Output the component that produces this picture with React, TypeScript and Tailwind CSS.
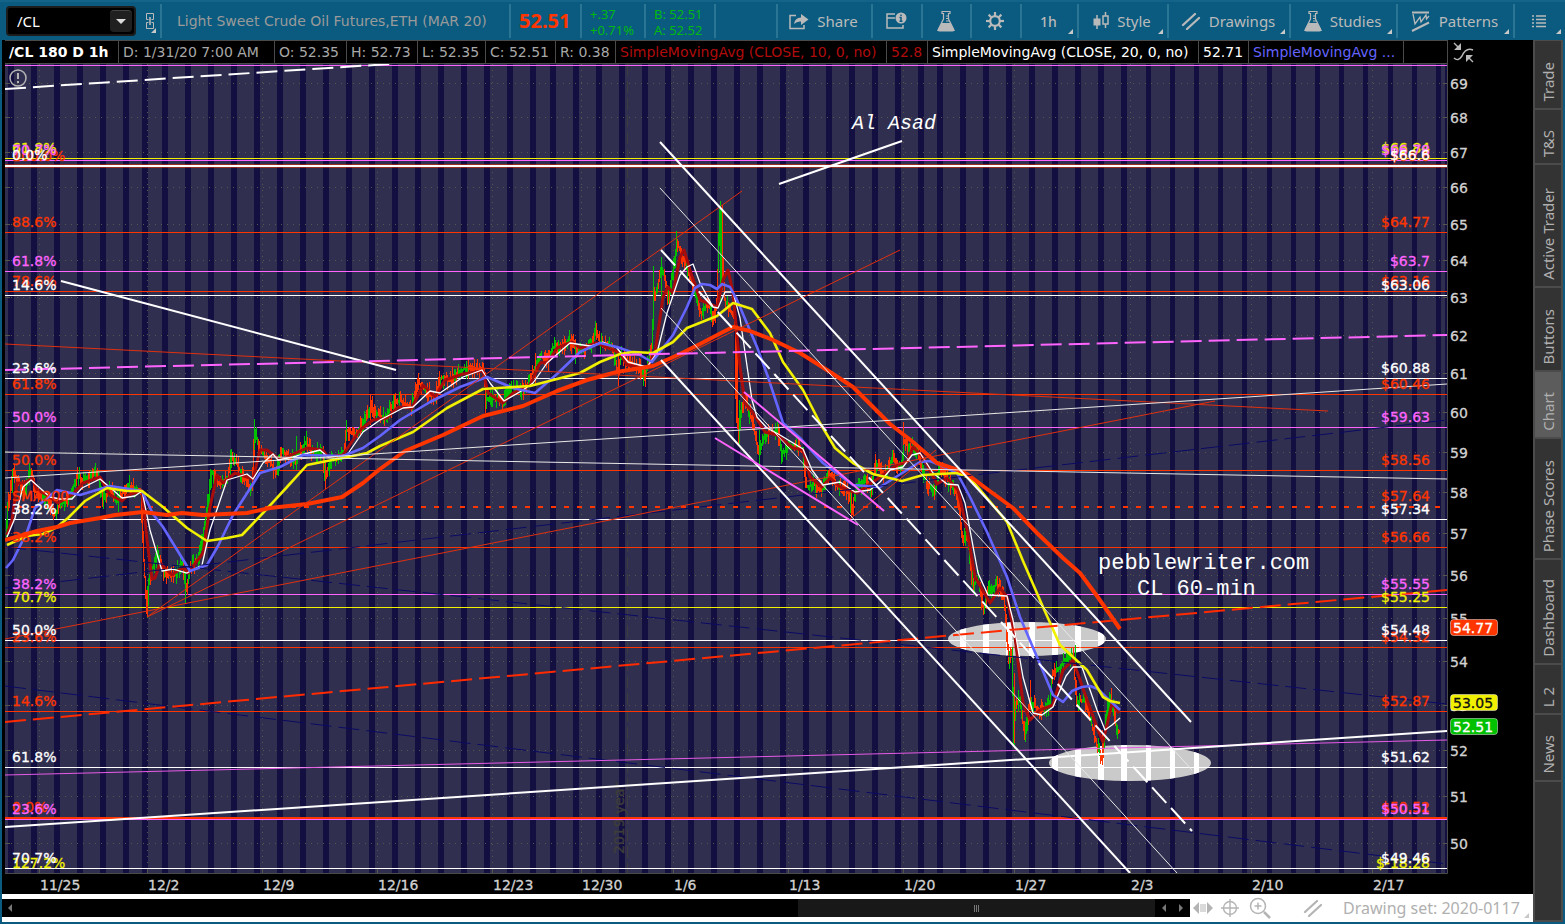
import type { ReactNode } from "react";

type Pt = [number, number];

const ORANGE = "#ff3500";
const MAGENTA = "#ff64ff";
const YELLOW = "#f0f000";
const WHITE = "#ffffff";
const RED = "#e0300f";
const NAVY = "#0a0a64";

const TABS = [
  { label: "Trade", height: "h-[69px]" },
  { label: "T&S", height: "h-[55px]" },
  { label: "Active Trader", height: "h-[123px]" },
  { label: "Buttons", height: "h-[84px]" },
  { label: "Chart", height: "h-[67px]", active: true },
  { label: "Phase Scores", height: "h-[121px]" },
  { label: "Dashboard", height: "h-[105px]" },
  { label: "L 2", height: "h-[50px]" },
  { label: "News", height: "h-[67px]" },
];

const STUDY_CELLS = [
  { text: "/CL 180 D 1h", className: "w-[114px] font-bold text-white" },
  { text: "D: 1/31/20 7:00 AM", className: "w-[156px] text-[#a8a8a8]" },
  { text: "O: 52.35", className: "w-[72px] text-[#a8a8a8]" },
  { text: "H: 52.73", className: "w-[71px] text-[#a8a8a8]" },
  { text: "L: 52.35", className: "w-[68px] text-[#a8a8a8]" },
  { text: "C: 52.51", className: "w-[70px] text-[#a8a8a8]" },
  { text: "R: 0.38", className: "w-[60px] text-[#a8a8a8]" },
  { text: "SimpleMovingAvg (CLOSE, 10, 0, no)", className: "w-[271px] text-[#b00c0c]" },
  { text: "52.8", className: "w-[41px] text-[#b00c0c]" },
  { text: "SimpleMovingAvg (CLOSE, 20, 0, no)", className: "w-[271px] text-white" },
  { text: "52.71", className: "w-[50px] text-white" },
  { text: "SimpleMovingAvg ...", className: "w-[155px] text-[#6464ff]" },
];

const DATES: [string, number][] = [
  ["11/25", 39], ["12/2", 147], ["12/9", 262], ["12/16", 377], ["12/23", 492],
  ["12/30", 581], ["1/6", 673], ["1/13", 788], ["1/20", 903], ["1/27", 1014],
  ["2/3", 1130], ["2/10", 1251], ["2/17", 1372],
];

const STRIPES = [
  8, 31, 54, 77, 100, 123, 142, 162, 185, 208, 231, 254, 277, 300, 323, 346, 369,
  392, 415, 438, 461, 484, 507, 530, 550, 573, 596, 619, 642, 665, 688, 711, 734,
  757, 780, 803, 826, 849, 872, 895, 918, 937, 960, 983, 1006, 1029, 1052, 1075,
  1098, 1121, 1146, 1170, 1194, 1218, 1242, 1267, 1291, 1315, 1339, 1363, 1388,
  1412, 1436,
];

// Retracement levels, later ones are painted over earlier ones
const LEVELS: { y: number; color: string; left: string; right: string; w?: number }[] = [
  { y: 166, color: ORANGE, left: "100.0%", right: "$66.6", w: 4 },
  { y: 158, color: YELLOW, left: "61.8%", right: "$66.84" },
  { y: 160, color: MAGENTA, left: "70.7%", right: "$66.78" },
  { y: 166, color: WHITE, left: "0.0%", right: "$66.6", w: 2 },
  { y: 232, color: ORANGE, left: "88.6%", right: "$64.77" },
  { y: 271, color: MAGENTA, left: "61.8%", right: "$63.7" },
  { y: 291, color: ORANGE, left: "78.6%", right: "$63.16" },
  { y: 295, color: WHITE, left: "14.6%", right: "$63.06" },
  { y: 394, color: ORANGE, left: "61.8%", right: "$60.46" },
  { y: 378, color: WHITE, left: "23.6%", right: "$60.88" },
  { y: 427, color: MAGENTA, left: "50.0%", right: "$59.63" },
  { y: 470, color: ORANGE, left: "50.0%", right: "$58.56" },
  { y: 547, color: ORANGE, left: "38.2%", right: "$56.66" },
  { y: 519, color: WHITE, left: "38.2%", right: "$57.34" },
  { y: 607, color: YELLOW, left: "70.7%", right: "$55.25" },
  { y: 594, color: MAGENTA, left: "38.2%", right: "$55.55" },
  { y: 647, color: ORANGE, left: "23.6%", right: "$54.32" },
  { y: 640, color: WHITE, left: "50.0%", right: "$54.48" },
  { y: 711, color: ORANGE, left: "14.6%", right: "$52.87" },
  { y: 767, color: WHITE, left: "61.8%", right: "$51.62" },
  { y: 818, color: ORANGE, left: "0.0%", right: "$50.52", w: 2 },
  { y: 819, color: MAGENTA, left: "23.6%", right: "$50.51" },
  { y: 873, color: YELLOW, left: "127.2%", right: "$-18.28" },
  { y: 868, color: WHITE, left: "70.7%", right: "$49.46" },
];

const TRENDS: { p: [number, number, number, number]; color: string; w: number; dash?: string }[] = [
  { p: [5, 547, 1447, 704], color: NAVY, w: 1, dash: "21 7" },
  { p: [5, 588, 1447, 420], color: NAVY, w: 1, dash: "21 7" },
  { p: [5, 686, 1447, 864], color: NAVY, w: 1, dash: "21 7" },
  { p: [5, 344, 1328, 411], color: RED, w: 1 },
  { p: [147, 617, 742, 191], color: RED, w: 1 },
  { p: [147, 617, 900, 250], color: RED, w: 1 },
  { p: [5, 639, 1215, 401], color: RED, w: 1 },
  { p: [850, 519, 936, 450], color: RED, w: 1 },
  { p: [5, 452, 1447, 479], color: "#e8e8e8", w: 1 },
  { p: [5, 478, 1447, 384], color: "#e8e8e8", w: 1 },
  { p: [5, 89, 390, 64], color: WHITE, w: 2, dash: "21 7" },
  { p: [61, 281, 396, 370], color: WHITE, w: 2 },
  { p: [5, 370, 1447, 335], color: MAGENTA, w: 2, dash: "21 7" },
  { p: [5, 722, 1447, 590], color: "#ff2a00", w: 2, dash: "21 7" },
  { p: [5, 775, 1447, 740], color: "#e65ae6", w: 1 },
  { p: [5, 827, 1447, 731], color: WHITE, w: 2 },
  { p: [779, 184, 902, 141], color: WHITE, w: 2 },
  { p: [660, 142, 1191, 722], color: WHITE, w: 2 },
  { p: [660, 188, 1192, 770], color: "#e8e8e8", w: 1 },
  { p: [661, 250, 1192, 831], color: WHITE, w: 2, dash: "21 7" },
  { p: [661, 308, 1177, 873], color: "#e8e8e8", w: 1 },
  { p: [661, 360, 1130, 873], color: WHITE, w: 2 },
  { p: [744, 392, 884, 511], color: MAGENTA, w: 2 },
  { p: [715, 438, 858, 525], color: MAGENTA, w: 2 },
];

const SMA200 =
  "5,540 37,531 57,527 70,523 100,518 115,515 143,512 167,515 182,513 203,515 247,513 270,508 307,504 342,497 363,483 380,469 405,451 443,435 483,416 523,406 557,391 587,380 617,372 653,366 680,354 700,344 723,332 733,327 750,331 773,340 800,353 827,370 853,387 890,424 913,442 937,463 958,470 967,474 987,489 1013,508 1037,533 1063,558 1080,573 1097,596 1120,629";

const SMA100 =
  "7,545 27,536 43,534 57,527 68,518 85,501 107,488 127,491 142,491 163,507 187,528 207,541 227,538 242,535 263,513 287,487 307,465 327,461 343,458 367,453 380,446 413,432 447,408 483,389 530,386 557,379 580,373 600,362 620,354 633,352 653,353 673,342 687,328 717,316 733,303 752,309 770,333 783,362 803,390 820,423 835,448 853,463 873,474 902,481 923,475 957,473 970,478 987,498 1007,522 1023,561 1043,607 1060,645 1087,670 1103,697 1110,701 1120,703";

const SMA50 =
  "6,568 13,560 27,532 35,508 57,490 80,495 110,486 142,491 153,514 163,527 190,571 207,565 218,546 233,515 260,473 280,467 303,455 343,456 363,448 380,436 400,420 430,402 460,387 487,377 513,388 535,393 557,374 580,352 600,343 617,347 640,355 652,362 673,335 687,307 695,288 702,284 710,285 717,289 722,284 730,287 737,300 757,347 768,377 783,423 800,438 823,463 853,485 880,487 907,470 920,462 930,461 947,468 957,473 970,497 987,532 1007,577 1020,617 1037,657 1053,695 1063,702 1072,691 1082,687 1090,686 1098,689 1107,698 1120,710";

const SMA20 =
  "7,537 15,518 23,487 31,480 50,497 60,499 72,499 82,488 100,479 113,490 122,498 135,496 142,491 150,530 162,571 173,569 187,573 202,565 210,530 227,480 247,474 253,479 263,463 273,454 278,460 293,457 320,450 328,457 347,455 363,432 380,420 403,408 413,407 430,391 440,393 463,377 482,370 490,383 504,401 523,390 533,383 547,363 570,343 590,346 603,342 617,348 628,362 647,367 657,353 667,313 680,275 687,267 693,264 700,283 713,307 718,308 725,292 733,292 740,318 752,400 757,417 767,428 780,435 803,449 812,470 823,485 840,482 855,492 870,490 880,482 890,470 903,467 912,455 920,453 933,473 947,484 958,485 965,503 978,573 988,595 1007,596 1013,620 1023,677 1033,713 1042,715 1053,707 1066,676 1073,667 1082,667 1097,710 1105,730 1112,725 1120,718";

const SMA10 =
  "7,535 12,520 17,483 25,483 32,478 37,490 47,495 58,503 72,495 83,483 100,477 110,495 122,501 128,495 142,491 147,540 152,579 155,578 160,563 172,575 183,567 188,573 203,553 210,507 217,475 223,483 235,473 253,479 260,450 267,450 280,460 307,448 323,450 328,457 343,455 353,440 360,430 373,420 387,418 398,407 412,408 423,385 435,397 445,380 463,374 483,371 488,393 503,403 513,393 530,385 540,363 548,362 557,348 572,342 580,348 597,343 620,353 627,365 647,368 655,353 663,297 668,287 673,293 680,257 684,250 690,270 700,300 717,307 723,280 728,270 733,293 740,367 745,403 753,413 765,432 777,435 793,448 803,450 810,477 822,487 830,478 840,487 857,493 873,482 897,465 907,462 913,447 923,457 937,484 947,478 958,490 967,530 975,577 990,603 1000,588 1007,597 1015,637 1023,703 1030,720 1040,710 1053,705 1063,670 1073,660 1087,700 1098,730 1103,742 1112,703 1119,713";

// Swing points of the hourly price, bars are filled in between them
const SWINGS: Pt[] = [
  [6, 535], [8, 510], [13, 475], [17, 478], [25, 492], [31, 470], [35, 490], [45, 495],
  [55, 515], [60, 505], [70, 497], [78, 475], [83, 480], [90, 478], [98, 472], [103, 500],
  [110, 490], [118, 502], [127, 485], [141, 490], [144, 560], [147, 610], [149, 580],
  [158, 553], [165, 575], [175, 575], [183, 563], [186, 590], [190, 570], [200, 555],
  [207, 510], [212, 472], [220, 485], [228, 477], [232, 455], [240, 470], [252, 490],
  [255, 430], [260, 450], [270, 462], [277, 472], [282, 450], [295, 462], [302, 448],
  [306, 442], [313, 455], [323, 450], [325, 478], [332, 460], [345, 450], [347, 430],
  [355, 435], [362, 425], [368, 415], [371, 405], [375, 412], [385, 418], [393, 405],
  [400, 400], [412, 408], [418, 382], [425, 390], [435, 398], [441, 378], [450, 380],
  [462, 370], [470, 367], [484, 370], [486, 400], [495, 398], [503, 402], [512, 388],
  [525, 390], [534, 370], [540, 355], [548, 362], [553, 347], [562, 345], [570, 340],
  [578, 352], [590, 347], [596, 328], [600, 343], [612, 348], [618, 372], [622, 355],
  [632, 365], [643, 370], [645, 380], [652, 345], [654, 300], [661, 272], [664, 275],
  [669, 300], [674, 265], [677, 242], [682, 255], [690, 275], [697, 300], [702, 315],
  [708, 300], [714, 320], [717, 300], [720, 215], [722, 250], [725, 300], [735, 320],
  [736, 390], [739, 435], [742, 405], [745, 400], [752, 420], [759, 453], [765, 435],
  [778, 430], [782, 453], [792, 445], [803, 450], [807, 487], [815, 485], [822, 492],
  [828, 472], [838, 488], [848, 490], [852, 510], [856, 490], [866, 478], [871, 492],
  [876, 463], [884, 475], [893, 460], [902, 468], [904, 442], [910, 447], [918, 452],
  [925, 480], [935, 494], [940, 468], [948, 480], [955, 490], [959, 500], [962, 535],
  [968, 540], [973, 585], [978, 580], [984, 612], [987, 592], [997, 584], [1004, 597],
  [1009, 660], [1012, 650], [1014, 735], [1016, 705], [1020, 698], [1025, 738], [1030, 702],
  [1040, 710], [1050, 705], [1053, 672], [1060, 668], [1067, 658], [1073, 655], [1077, 702],
  [1085, 700], [1092, 725], [1097, 745], [1102, 760], [1107, 713], [1111, 697], [1117, 730],
  [1120, 732],
];

const SPIKES: [number, number, number, string][] = [
  [254, 419, 450, "#00c000"],
  [370, 394, 425, ORANGE],
  [306, 431, 450, "#00c000"],
  [296, 436, 455, "#00c000"],
  [147, 590, 617, ORANGE],
  [185, 570, 603, "#00c000"],
  [325, 460, 489, ORANGE],
  [485, 372, 413, ORANGE],
  [535, 353, 385, ORANGE],
  [575, 345, 364, "#00c000"],
  [618, 350, 386, ORANGE],
  [645, 370, 387, ORANGE],
  [653, 266, 330, "#00c000"],
  [661, 257, 300, "#00c000"],
  [720, 201, 300, "#00c000"],
  [722, 205, 290, ORANGE],
  [739, 400, 444, "#00c000"],
  [759, 430, 464, "#00c000"],
  [851, 490, 518, ORANGE],
  [903, 422, 445, ORANGE],
  [1014, 673, 743, ORANGE],
  [1030, 680, 710, ORANGE],
  [1075, 645, 670, "#00c000"],
  [1102, 730, 765, ORANGE],
];

function noise(n: number) {
  const v = Math.sin(n * 127.1 + 11.7) * 43758.5453;
  return v - Math.floor(v);
}

function buildBars() {
  const up: string[] = [];
  const down: string[] = [];
  for (let i = 0; i < SWINGS.length - 1; i++) {
    const [x0, y0] = SWINGS[i];
    const [x1, y1] = SWINGS[i + 1];
    for (let x = x0; x < x1; x++) {
      const a = y0 + ((y1 - y0) * (x - x0)) / (x1 - x0);
      const b = y0 + ((y1 - y0) * (x + 1 - x0)) / (x1 - x0);
      const top = Math.round(Math.min(a, b) - 1 - noise(x) ** 2 * 10);
      const bottom = Math.round(Math.max(a, b) + 1 + noise(x + 900) ** 2 * 10);
      const rising = noise(Math.floor(x / 2) + 77) < 0.3 ? y1 > y0 : y1 < y0;
      (rising ? up : down).push(`M${x + 0.5} ${top}V${bottom}`);
    }
  }
  return { up: up.join(""), down: down.join("") };
}

const BARS = buildBars();

const priceY = (p: number) => Math.round(82.6 + (760 * Math.log(69 / p)) / Math.log(69 / 50));
const PRICES = Array.from({ length: 20 }, (_, i) => 69 - i);

function PriceTag({ y, text, fill, color }: { y: number; text: string; fill: string; color: string }) {
  return (
    <g>
      <rect x={1450.5} y={y + 0.5} width={47} height={16} rx={3} fill={fill} stroke="#ffffff" strokeOpacity={0.45} />
      <text x={1453} y={y + 14} fill={color} stroke={color} strokeWidth={0.3} className="text-[14px]">
        {text}
      </text>
    </g>
  );
}

function PriceChart() {
  return (
    <svg
      viewBox="5 64 1528 830"
      className="block w-full bg-black"
      role="img"
      aria-label="Crude oil futures hourly chart"
      fontFamily="'DejaVu Sans', sans-serif"
    >
      <defs>
        <clipPath id="plot">
          <rect x={5} y={64} width={1442} height={809} />
        </clipPath>
        <clipPath id="zones">
          <ellipse cx={1027} cy={639} rx={79} ry={17} />
          <ellipse cx={1130} cy={763} rx={81} ry={18} />
        </clipPath>
      </defs>

      <rect x={5} y={64} width={1442} height={809} fill="#312f4f" />
      <g clipPath="url(#plot)">
        {STRIPES.map((x) => (
          <rect key={x} x={x} y={64} width={x > 1140 ? 5 : 6} height={809} fill="#130f41" />
        ))}
        <rect x={1445} y={64} width={2} height={809} fill="#130f41" />

        {/* Grid */}
        <g stroke="#56564c" shapeRendering="crispEdges">
          {PRICES.map((p) => (
            <g key={p}>
              <line x1={5} x2={1447} y1={priceY(p) + 0.5} y2={priceY(p) + 0.5} strokeDasharray="1 5" />
              <line x1={5} x2={10} y1={priceY(p) + 0.5} y2={priceY(p) + 0.5} />
              <line x1={1443} x2={1447} y1={priceY(p) + 0.5} y2={priceY(p) + 0.5} />
            </g>
          ))}
          {DATES.map(([d, x]) => (
            <g key={d}>
              <line x1={x + 0.5} x2={x + 0.5} y1={64} y2={873} strokeDasharray="1 5" />
              <line x1={x + 0.5} x2={x + 0.5} y1={869} y2={873} />
            </g>
          ))}
          <line x1={627.5} x2={627.5} y1={64} y2={873} stroke="#3c3c3c" strokeDasharray="12 5" />
        </g>
        <text transform="translate(624 854) rotate(-90)" fill="#3d3d3a" stroke="#3d3d3a" strokeWidth={0.4} className="text-[14px]">
          2019 year
        </text>

        {/* Target zones */}
        <g clipPath="url(#zones)">
          <rect x={940} y={610} width={280} height={180} fill="#cacaca" />
          {STRIPES.map((x) => (
            <rect key={x} x={x} y={610} width={x > 1140 ? 5 : 6} height={180} fill="#ffffff" />
          ))}
        </g>

        {/* Level lines */}
        <g shapeRendering="crispEdges">
          <line x1={5} x2={1447} y1={65.5} y2={65.5} stroke={MAGENTA} />
          {LEVELS.map((l, i) => (
            <line
              key={i}
              x1={5}
              x2={1447}
              y1={l.w ? l.y : l.y + 0.5}
              y2={l.w ? l.y : l.y + 0.5}
              stroke={l.color}
              strokeWidth={l.w ?? 1}
              strokeOpacity={l.w === 4 ? 0.5 : 1}
            />
          ))}
          <line x1={5} x2={1443} y1={507} y2={507} stroke={ORANGE} strokeWidth={2} strokeDasharray="5 8" />
        </g>

        {/* Price bars */}
        <path d={BARS.up} stroke="#00c000" fill="none" strokeWidth={1} />
        <path d={BARS.down} stroke={ORANGE} fill="none" strokeWidth={1} />
        {SPIKES.map(([x, y0, y1, c]) => (
          <line key={`${x}-${y0}`} x1={x + 0.5} x2={x + 0.5} y1={y0} y2={y1} stroke={c} strokeWidth={1} />
        ))}
        <rect x={720} y={208} width={2} height={80} fill="#00c000" />
        <rect x={736} y={325} width={2} height={98} fill={ORANGE} />

        {/* Averages */}
        <g fill="none" strokeLinejoin="round">
          <polyline points={SMA10} stroke="#a80c0c" strokeWidth={3} />
          <polyline points={SMA20} stroke={WHITE} strokeWidth={1.3} />
          <polyline points={SMA50} stroke="#6464ff" strokeWidth={2.6} />
          <polyline points={SMA100} stroke={YELLOW} strokeWidth={2.6} />
          <polyline points={SMA200} stroke={ORANGE} strokeWidth={4} />
        </g>

        {TRENDS.map((t, i) => (
          <line
            key={i}
            x1={t.p[0]}
            y1={t.p[1]}
            x2={t.p[2]}
            y2={t.p[3]}
            stroke={t.color}
            strokeWidth={t.w}
            strokeDasharray={t.dash}
          />
        ))}

        {/* Level labels */}
        <g className="text-[14px]" strokeWidth={0.3}>
          {LEVELS.map((l, i) => (
            <g key={i} fill={l.color} stroke={l.color}>
              <text x={12} y={l.y - (l.w === 2 ? 6 : 5)}>
                {l.left}
              </text>
              <text x={1430} y={l.y - (l.w === 2 ? 6 : 5)} textAnchor="end">
                {l.right}
              </text>
            </g>
          ))}
          <g fill={ORANGE} stroke={ORANGE}>
            <text x={12} y={501}>SMA200</text>
            <text x={1430} y={501} textAnchor="end">$57.64</text>
          </g>
        </g>

        {/* Notes */}
        <g fill="#ffffff" fontFamily="'Liberation Mono', monospace">
          <text x={852} y={129} className="text-[20px] italic">Al Asad</text>
          <text x={1098} y={569} className="text-[22px]">pebblewriter.com</text>
          <text x={1137} y={595} className="text-[22px]">CL 60-min</text>
        </g>
      </g>

      {/* Info marker */}
      <g stroke="#b4b4b4" fill="none" strokeWidth={2}>
        <circle cx={18} cy={78} r={8} strokeWidth={1.5} />
        <path d="M18 73v6M18 81v2" />
      </g>

      {/* Axes */}
      <path d="M1447.5 64V873.5H5" stroke="#4a4a4a" fill="none" />
      <g fill="#d2d2d2" stroke="#d2d2d2" strokeWidth={0.3} className="text-[14px]">
        {PRICES.map((p) => (
          <text key={p} x={1450} y={priceY(p) + 6}>{p}</text>
        ))}
        {DATES.map(([d, x]) => (
          <text key={d} x={x + 1} y={890}>{d}</text>
        ))}
      </g>
      <PriceTag y={619} text="54.77" fill="#ff3500" color="#ffffff" />
      <PriceTag y={694} text="53.05" fill="#f0f000" color="#111111" />
      <PriceTag y={718} text="52.51" fill="#00c000" color="#ffffff" />
    </svg>
  );
}

function Corner() {
  return (
    <svg viewBox="0 0 5 5" className="absolute right-1 bottom-1 h-[5px] w-[5px]" fill="#c8c8c8">
      <path d="M5 0V5H0z" />
    </svg>
  );
}

function ToolButton({
  width,
  label,
  children,
  menu = false,
}: {
  width: string;
  label: string;
  children: ReactNode;
  menu?: boolean;
}) {
  return (
    <button
      type="button"
      aria-label={label}
      className={`relative flex shrink-0 items-center justify-center gap-2 border-l-2 border-[#2b7594] pr-0.5 text-[15px] text-[#bababa] ${width}`}
    >
      {children}
      {menu && <Corner />}
    </button>
  );
}

function FlaskIcon() {
  return (
    <svg viewBox="0 0 18 22" className="h-[22px] w-[18px]" fill="none" stroke="#bababa" strokeWidth={1.2}>
      <path d="M5 1.5h8v2h-1.500v5.500l5 10q.8 2-1 2h-13q-1.800 0-1-2l5-10V3.500H5z" />
      <path d="M5 13.500h8L17 20.500H1z" fill="#bababa" />
      <path d="M9 6h2.500M9 8.500h2.500M9 11h3" />
    </svg>
  );
}

function SlashIcon({ color }: { color: string }) {
  return (
    <svg viewBox="0 0 20 18" className="h-[18px] w-5" fill="none" stroke={color} strokeWidth={2.2} strokeLinecap="round">
      <path d="M2 13L14 2M6 17L18 6" />
    </svg>
  );
}

function Toolbar() {
  return (
    <header className="flex h-10 border-t-2 border-[#14648a] pt-0.5 pb-0.5">
      <div className="flex w-40 shrink-0 items-center">
        <div className="ml-1.5 flex h-[30px] w-[131px] items-center rounded border-2 border-[#1c1c1c] bg-black">
          <input
            aria-label="Symbol"
            defaultValue="/CL"
            className="h-full w-[102px] bg-transparent pl-[9px] text-[15px] text-white outline-none"
          />
          <button type="button" aria-label="Symbol list" className="flex h-[22px] w-[22px] items-center justify-center rounded-sm border-t border-[#444] bg-[#202020]">
            <svg viewBox="0 0 10 5" className="h-[5px] w-2.5" fill="#dcdcdc">
              <path d="M0 0h10L5 5z" />
            </svg>
          </button>
        </div>
        <button type="button" aria-label="Link symbol" className="relative ml-1 h-8 w-5">
          <svg viewBox="0 0 8 16" className="mx-auto h-4 w-2" fill="none" stroke="#bababa">
            <path d="M2.500 6.500h-2v-6h7v6h-2M2.500 9.500h-2v6h7v-6h-2" />
            <path d="M4 4v8" strokeWidth={1.600} />
          </svg>
          <Corner />
        </button>
      </div>
      <div className="flex w-[349px] shrink-0 items-center border-l-2 border-[#2b7594] pl-[15px] font-['DejaVu_Sans',sans-serif] text-[14px] whitespace-nowrap text-[#9a9a9a]">
        Light Sweet Crude Oil Futures,ETH (MAR 20)
      </div>
      <div className="flex w-[71px] shrink-0 items-center border-l-2 border-[#2b7594] pl-2 text-[20px] font-bold text-[#ff3500]">
        52.51
      </div>
      <div className="w-16 shrink-0 border-l-2 border-[#2b7594] pt-0.5 pl-2 text-[13px] leading-4 text-[#00b810]">
        <p>+.37</p>
        <p>+0.71%</p>
      </div>
      <div className="w-[70px] shrink-0 border-l-2 border-[#2b7594] pt-0.5 pl-2 text-[13px] leading-4 text-[#00b810]">
        <p>B: 52.51</p>
        <p>A: 52.52</p>
      </div>
      <div className="min-w-0 flex-1 border-l-2 border-[#2b7594]" />
      <ToolButton width="w-[95px]" label="Share">
        <svg viewBox="0 0 20 17" className="h-[17px] w-5" fill="none" stroke="#bababa" strokeWidth={1.5}>
          <path d="M7 2.500H1v13h14V12" />
          <path d="M5 11Q6 4.500 12 4.500V1l7.500 5.500L12 12V8.500Q8 8 5 11z" fill="#bababa" stroke="none" />
        </svg>
        <span>Share</span>
      </ToolButton>
      <ToolButton width="w-[50px]" label="News window">
        <svg viewBox="0 0 21 18" className="h-[18px] w-[21px]" fill="none" stroke="#bababa" strokeWidth={1.500}>
          <path d="M9 2H1v14h16v-3M1 6h8" />
          <circle cx={15} cy={6} r={5.500} fill="#bababa" stroke="none" />
          <path d="M15 2.500v1.500M13.500 5.500H15V9M13.500 9.200h3" stroke="#0b5b80" />
        </svg>
      </ToolButton>
      <ToolButton width="w-[49px]" label="Quick study">
        <FlaskIcon />
      </ToolButton>
      <ToolButton width="w-[50px]" label="Settings">
        <svg viewBox="-10 -10 20 20" className="h-5 w-5" fill="none" stroke="#bababa" strokeWidth={2.200}>
          <circle r={4.800} />
          {[0, 45, 90, 135, 180, 225, 270, 315].map((a) => (
            <path key={a} d="M0-5V-9" transform={`rotate(${a})`} />
          ))}
        </svg>
      </ToolButton>
      <ToolButton width="w-[57px]" label="Time frame" menu>
        <span className="text-[14px] font-medium">1h</span>
      </ToolButton>
      <ToolButton width="w-[90px]" label="Style" menu>
        <svg viewBox="0 0 16 18" className="h-[18px] w-4" fill="none" stroke="#bababa">
          <path d="M4 3v14" strokeWidth={1.500} />
          <rect x={1} y={7} width={6} height={6} fill="#bababa" />
          <path d="M12.500 0v4M12.500 12v4M10 4h5v8h-5z" strokeWidth={1.500} />
        </svg>
        <span>Style</span>
      </ToolButton>
      <ToolButton width="w-[122px]" label="Drawings" menu>
        <SlashIcon color="#bababa" />
        <span>Drawings</span>
      </ToolButton>
      <ToolButton width="w-[107px]" label="Studies" menu>
        <FlaskIcon />
        <span>Studies</span>
      </ToolButton>
      <ToolButton width="w-[117px]" label="Patterns" menu>
        <svg viewBox="0 0 20 21" className="h-[21px] w-5" fill="none" stroke="#bababa">
          <path d="M1 1.500h17" strokeWidth={2} />
          <path d="M1 20L18 11.500" strokeWidth={2} />
          <path d="M2 3L4 13L9 6L10 11L15 4L15.500 8L18 5" strokeWidth={1.300} />
        </svg>
        <span>Patterns</span>
      </ToolButton>
      <ToolButton width="w-[52px]" label="Chart menu" menu>
        <svg viewBox="0 0 14 13" className="h-[13px] w-[14px]" fill="none" stroke="#bababa" strokeWidth={1.500}>
          <path d="M0 1h2M4 1h10M0 4.500h2M4 4.500h10M0 8h2M4 8h10M0 11.500h2M4 11.500h10" />
        </svg>
      </ToolButton>
    </header>
  );
}

function StudyBar() {
  return (
    <div className="flex h-6 bg-black font-['DejaVu_Sans',sans-serif]">
      <div className="flex min-w-0 flex-1 overflow-hidden border-t border-b border-[#4a4a4a]">
        {STUDY_CELLS.map((c, i) => (
          <div
            key={i}
            className={`flex shrink-0 items-center border-r border-[#4a4a4a] pl-1 text-[14px] whitespace-nowrap ${c.className}`}
          >
            {c.text}
          </div>
        ))}
      </div>
      <div className="w-[86px] shrink-0 border-l border-[#4a4a4a] pl-[5px]">
        <button type="button" aria-label="Fit axis">
          <svg viewBox="0 0 21 21" className="mt-0.5 h-[21px] w-[21px]" fill="none" stroke="#bababa" strokeWidth={1.400}>
            <path d="M1 16Q5 20 9 14Q13 5 20 8" />
            <path d="M1 1l5 5M20 20l-5-5" />
            <path d="M8 1v7H1zM13 13h7l-7 7z" fill="#bababa" stroke="none" />
          </svg>
        </button>
      </div>
    </div>
  );
}

function BottomBar() {
  return (
    <div className="flex h-7 items-center bg-white text-[#b0b0b0]">
      <div className="flex h-[18px] min-w-0 flex-1 bg-black">
        <button type="button" aria-label="Scroll left" className="w-4 shrink-0 pl-1.5">
          <svg viewBox="0 0 4 8" className="h-2 w-1" fill="#777">
            <path d="M4 0v8L0 4z" />
          </svg>
        </button>
        <div className="flex-[780]" />
        <div className="flex flex-[357] items-center justify-center gap-px bg-[#181818]">
          <span className="h-[7px] w-px bg-[#777]" />
          <span className="h-[7px] w-px bg-[#777]" />
          <span className="h-[7px] w-px bg-[#777]" />
        </div>
        <button type="button" aria-label="Step back" className="flex w-[17px] items-center justify-center">
          <svg viewBox="0 0 4 8" className="h-2 w-1" fill="#777">
            <path d="M4 0v8L0 4z" />
          </svg>
        </button>
        <button type="button" aria-label="Step forward" className="flex w-[18px] items-center justify-center">
          <svg viewBox="0 0 4 8" className="h-2 w-1" fill="#777">
            <path d="M0 0v8l4-4z" />
          </svg>
        </button>
      </div>
      <div className="relative flex h-full w-[343px] shrink-0 items-center pl-[3px]">
        <button type="button" aria-label="Pan">
          <svg viewBox="0 0 20 12" className="block h-3 w-5" fill="#b4b4b4">
            <path d="M6 0v12L0 6zM14 0v12l6-6zM7.500 2h1v8h-1zM9.500 2h1v8h-1zM11.500 2h1v8h-1z" />
          </svg>
        </button>
        <button type="button" aria-label="Crosshair" className="ml-2">
          <svg viewBox="0 0 18 18" className="block h-[18px] w-[18px]" fill="none" stroke="#b4b4b4" strokeWidth={1.400}>
            <circle cx={9} cy={9} r={6.500} />
            <path d="M9 0v18M0 9h18" />
          </svg>
        </button>
        <button type="button" aria-label="Zoom in" className="ml-2.5">
          <svg viewBox="0 0 22 22" className="block h-[22px] w-[22px]" fill="none" stroke="#b4b4b4" strokeWidth={1.500}>
            <circle cx={9} cy={9} r={7.500} />
            <path d="M9 5.500v7M5.500 9h7" />
            <path d="M15 15l6 6" strokeWidth={2.500} />
          </svg>
        </button>
        <button type="button" className="ml-8 flex items-center gap-5 text-[16px] whitespace-nowrap">
          <SlashIcon color="#b4b4b4" />
          Drawing set: 2020-0117
        </button>
        <Corner />
      </div>
    </div>
  );
}

function SideTabs() {
  return (
    <nav className="flex w-[30px] shrink-0 flex-col border-r-2 border-l-2 border-t border-b-2 border-[#4b4b4b] bg-[#333333]">
      {TABS.map((t) => (
        <button
          key={t.label}
          type="button"
          className={`flex shrink-0 items-end justify-center border-b-2 border-[#4b4b4b] pb-1.5 text-[15px] text-[#b0b0b0] ${t.height} ${
            t.active ? "bg-[#5c5c5c]" : ""
          }`}
        >
          <span className="rotate-180 leading-[26px] whitespace-nowrap [writing-mode:vertical-rl]">{t.label}</span>
        </button>
      ))}
    </nav>
  );
}

export default function App() {
  return (
    <div className="min-h-screen bg-[#0b5b80] font-['Noto_Sans',sans-serif]">
      <Toolbar />
      <div className="flex px-0.5">
        <main className="min-w-0 flex-1">
          <div className="border-l-[3px] border-black">
            <StudyBar />
            <PriceChart />
          </div>
          <BottomBar />
        </main>
        <SideTabs />
      </div>
    </div>
  );
}
